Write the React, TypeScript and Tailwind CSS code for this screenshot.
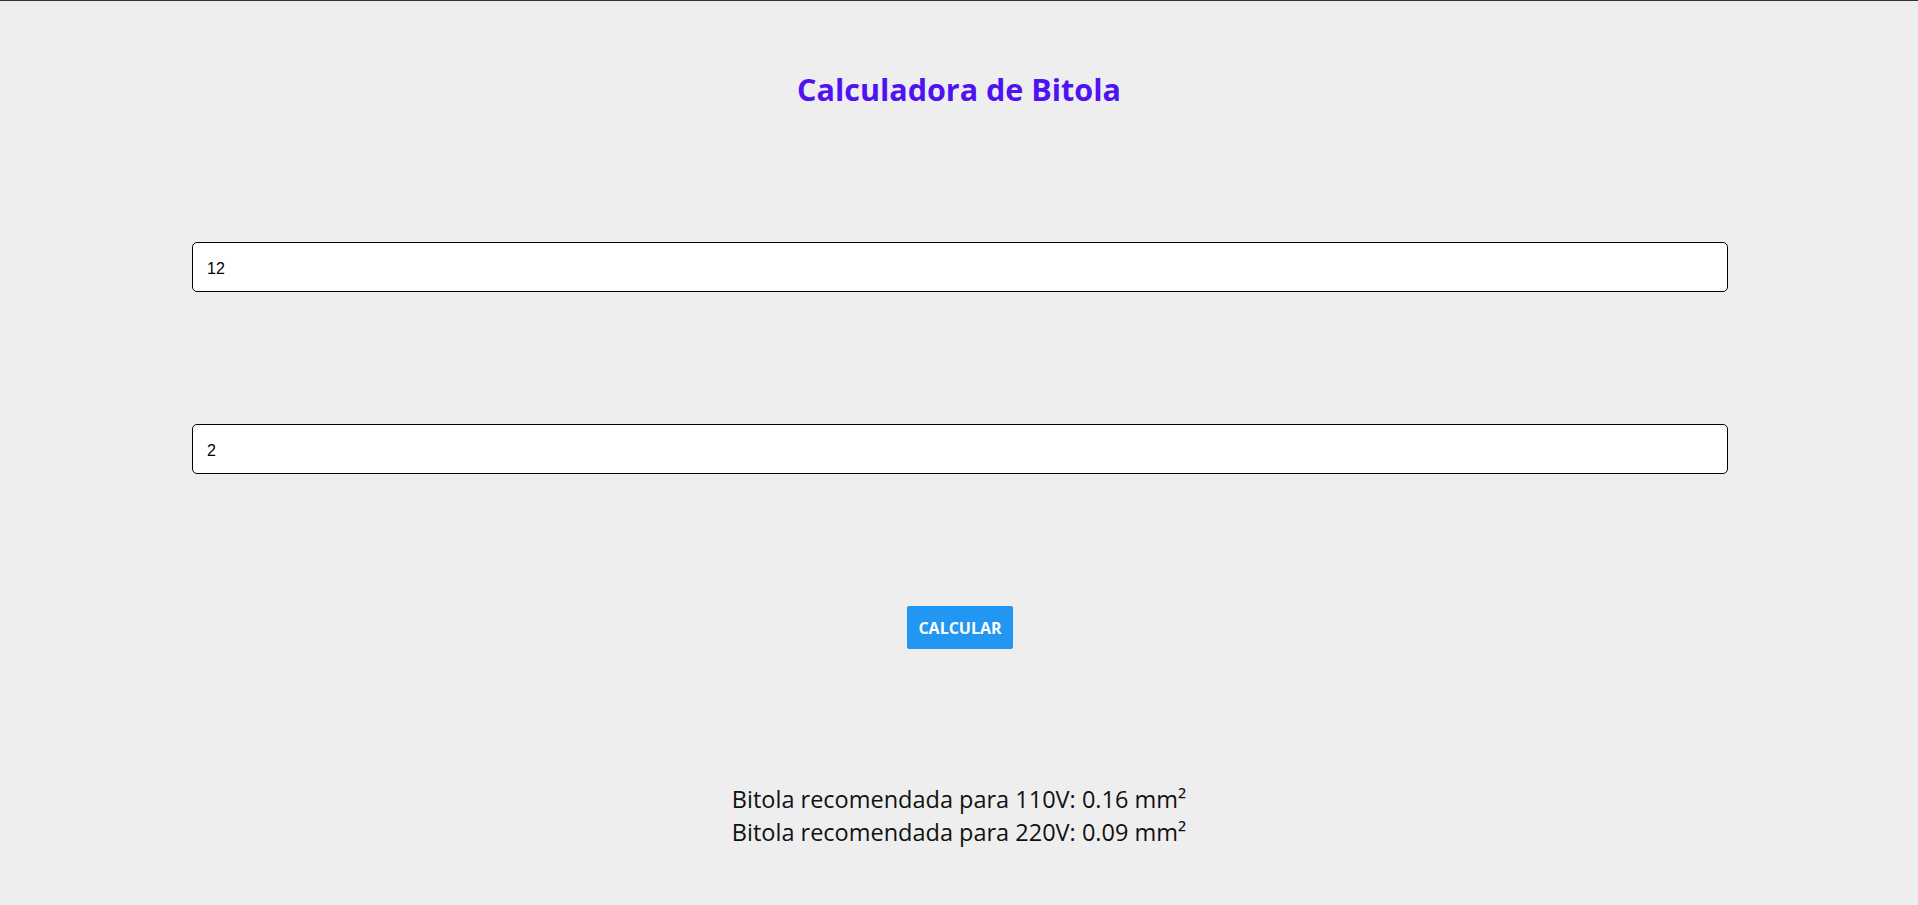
import { useState } from 'react';

export default function App() {
  const [corrente, setCorrente] = useState('12');
  const [distancia, setDistancia] = useState('2');

  return (
    <div className="min-h-screen bg-[#eeeeee] border-t border-[#333333] flex flex-col items-center font-['Open_Sans',sans-serif]">
      <h1 className="mt-[68px] text-[30.5px] leading-[40px] font-bold text-[#5012f4]">
        Calculadora de Bitola
      </h1>

      {/* Inputs */}
      <input
        type="text"
        value={corrente}
        onChange={e => setCorrente(e.target.value)}
        className="mt-[133px] ml-[2px] w-[1536px] h-[50px] bg-white border border-black rounded-[5px] pl-[14px] pt-[3px] text-[16px] font-normal text-black font-['Liberation_Sans',Arial,sans-serif] outline-none"
      />
      <input
        type="text"
        value={distancia}
        onChange={e => setDistancia(e.target.value)}
        className="mt-[132px] ml-[2px] w-[1536px] h-[50px] bg-white border border-black rounded-[5px] pl-[14px] pt-[3px] text-[16px] font-normal text-black font-['Liberation_Sans',Arial,sans-serif] outline-none"
      />

      <button className="mt-[132px] ml-[2px] w-[106px] h-[43px] bg-[#2196f3] rounded-[2px] text-white text-[16px] font-bold uppercase">
        Calcular
      </button>

      {/* Resultado */}
      <div className="mt-[134px] text-center text-[23.5px] leading-[33px] text-[#111111]">
        <div>Bitola recomendada para 110V: 0.16 mm²</div>
        <div>Bitola recomendada para 220V: 0.09 mm²</div>
      </div>
    </div>
  );
}
